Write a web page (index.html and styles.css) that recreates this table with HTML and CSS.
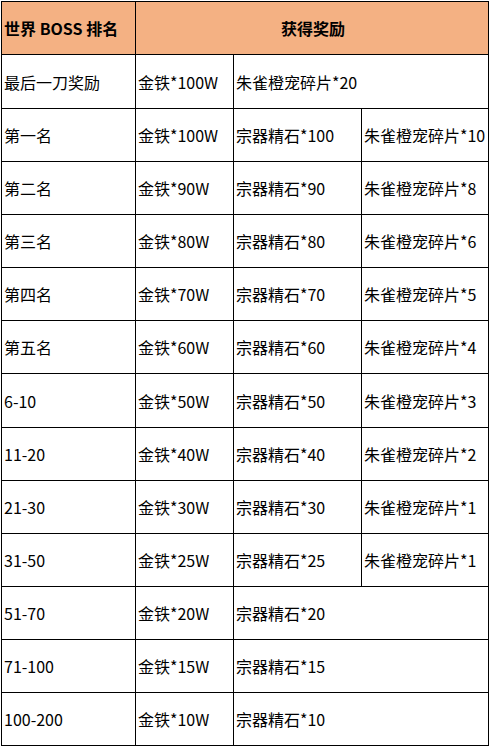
FILE: index.html
```html
<!DOCTYPE html>
<html lang="zh-CN">
<head>
<meta charset="utf-8">
<link rel="stylesheet" href="styles.css">
</head>
<body>
<table class="rank">
  <colgroup>
    <col class="c1"><col class="c2"><col class="c3"><col class="c4">
  </colgroup>
  <thead>
    <tr class="head">
      <th class="h-left">世界 BOSS 排名</th>
      <th class="h-center" colspan="3">获得奖励</th>
    </tr>
  </thead>
  <tbody>
    <tr class="tall"><td>最后一刀奖励</td><td>金铁*100W</td><td colspan="2">朱雀橙宠碎片*20</td></tr>
    <tr><td>第一名</td><td>金铁*100W</td><td>宗器精石*100</td><td>朱雀橙宠碎片*10</td></tr>
    <tr><td>第二名</td><td>金铁*90W</td><td>宗器精石*90</td><td>朱雀橙宠碎片*8</td></tr>
    <tr><td>第三名</td><td>金铁*80W</td><td>宗器精石*80</td><td>朱雀橙宠碎片*6</td></tr>
    <tr><td>第四名</td><td>金铁*70W</td><td>宗器精石*70</td><td>朱雀橙宠碎片*5</td></tr>
    <tr><td>第五名</td><td>金铁*60W</td><td>宗器精石*60</td><td>朱雀橙宠碎片*4</td></tr>
    <tr class="tall"><td>6-10</td><td>金铁*50W</td><td>宗器精石*50</td><td>朱雀橙宠碎片*3</td></tr>
    <tr><td>11-20</td><td>金铁*40W</td><td>宗器精石*40</td><td>朱雀橙宠碎片*2</td></tr>
    <tr><td>21-30</td><td>金铁*30W</td><td>宗器精石*30</td><td>朱雀橙宠碎片*1</td></tr>
    <tr><td>31-50</td><td>金铁*25W</td><td>宗器精石*25</td><td>朱雀橙宠碎片*1</td></tr>
    <tr><td>51-70</td><td>金铁*20W</td><td colspan="2">宗器精石*20</td></tr>
    <tr><td>71-100</td><td>金铁*15W</td><td colspan="2">宗器精石*15</td></tr>
    <tr><td>100-200</td><td>金铁*10W</td><td colspan="2">宗器精石*10</td></tr>
  </tbody>
</table>
</body>
</html>
```
FILE: styles.css
```css
html, body {
  margin: 0;
  padding: 0;
  background: #ffffff;
}
body {
  padding: 1px 0 0 1px;
  font-family: "Noto Sans CJK SC", "Noto Sans", "Liberation Sans", sans-serif;
  color: #000000;
}
.rank {
  border-collapse: collapse;
  table-layout: fixed;
  width: 488px;
  font-size: 16px;
}
.c1 { width: 134px; }
.c2 { width: 98px; }
.c3 { width: 128px; }
.c4 { width: 127px; }
.rank th,
.rank td {
  border: 1px solid #000000;
  padding: 0 0 0 2px;
  height: 53px;
  box-sizing: border-box;
  vertical-align: middle;
  white-space: nowrap;
  overflow: hidden;
  line-height: 20px;
}
.rank tr { height: 53px; }
.rank tr.tall { height: 54px; }
.rank tr.tall td { height: 54px; }
.head th {
  background: #f4b183;
  font-weight: bold;
  font-size: 16px;
}
.h-left { text-align: left; }
.h-center { text-align: center; }
```
